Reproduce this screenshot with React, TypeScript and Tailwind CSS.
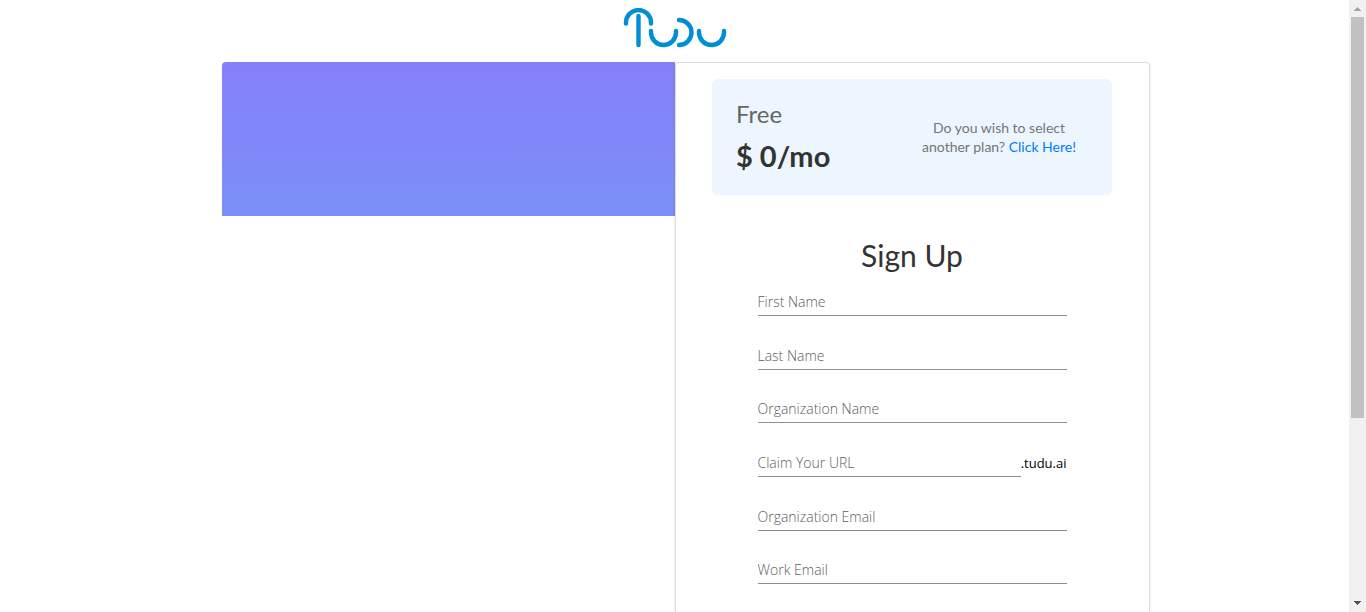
import React from "react";

type Field = { id: string; label: string; type: string; suffix?: string };

const fields: Field[] = [
  { id: "first-name", label: "First Name", type: "text" },
  { id: "last-name", label: "Last Name", type: "text" },
  { id: "organization-name", label: "Organization Name", type: "text" },
  { id: "url", label: "Claim Your URL", type: "text", suffix: ".tudu.ai" },
  { id: "organization-email", label: "Organization Email", type: "email" },
  { id: "work-email", label: "Work Email", type: "email" },
];

function Logo() {
  return (
    <svg
      width="105"
      height="40"
      viewBox="0 0 105 40"
      fill="none"
      stroke="#008fd5"
      strokeWidth="4.4"
      strokeLinecap="round"
      role="img"
      aria-label="Tudu"
    >
      <path d="M4 15.500v-1a12.500 12.500 0 0 1 25 0v1" />
      <path d="M16.500 8v29" />
      <path d="M29 23v1.500a12.500 12.500 0 0 0 25 0V23" />
      <path d="M57 12a12.500 12.500 0 0 1 0 25" />
      <path d="M77 23v1.500a12.500 12.500 0 0 0 25 0V23" />
    </svg>
  );
}

function SignUpField({ field }: { field: Field }) {
  return (
    <div className="flex items-start">
      <input
        id={field.id}
        type={field.type}
        placeholder={field.label}
        aria-label={field.label}
        className="h-[27px] min-w-0 flex-1 border-b border-[#8f8f8f] bg-transparent pb-px text-sm leading-5 font-light text-black outline-none placeholder:text-[#5c5c5c]"
      />
      {field.suffix && (
        <label htmlFor={field.id} className="text-[13px] leading-[26px] text-black">
          {field.suffix}
        </label>
      )}
    </div>
  );
}

function ScrollTrack() {
  return (
    <div aria-hidden="true" className="flex w-[17px] shrink-0 flex-col items-center bg-[#f1f1f1]">
      <svg width="17" height="17" viewBox="0 0 17 17" fill="#a3a3a3" shapeRendering="crispEdges">
        <path d="M8 7h1v1h1v1h1v1h1v1H5v-1h1V9h1V8h1z" />
      </svg>
      <div className="flex w-[13px] flex-1 flex-col">
        <div className="h-[69.400%] bg-[#c1c1c1]" />
      </div>
      <svg width="17" height="17" viewBox="0 0 17 17" fill="#505050" shapeRendering="crispEdges">
        <path d="M5 6h7v1h-1v1h-1v1H9v1H8V9H7V8H6V7H5z" />
      </svg>
    </div>
  );
}

export default function App() {
  return (
    <div className="flex h-screen bg-white font-['Lato',sans-serif]">
      <div className="flex min-w-0 flex-1 flex-col overflow-hidden">
        <header className="flex h-[62px] shrink-0 justify-center pt-2">
          <Logo />
        </header>
        <main className="grid flex-1 grid-cols-2">
          <div className="flex justify-end">
            <div className="h-[154px] w-full max-w-[453px] rounded-tl bg-linear-to-b from-[#8580fa] to-[#7b8ff8]" />
          </div>
          <section className="w-full max-w-[475px] rounded-t border border-b-0 border-[#dcdcdc] px-9 pt-4 shadow-sm">
            <div className="mx-auto flex h-[116px] max-w-[400px] items-center justify-between rounded-md bg-[#edf6ff] pr-9 pl-6">
              <div className="pt-0.5">
                <h2 className="text-2xl leading-9 text-[#666]">Free</h2>
                <p className="text-[29px] leading-[48px] font-bold text-[#333]">$ 0/mo</p>
              </div>
              <p className="w-[154px] text-center text-sm leading-[19px] text-[#757575]">
                Do you wish to select another plan?{" "}
                <a href="#plans" className="text-[#007bff]">
                  Click Here!
                </a>
              </p>
            </div>
            <form className="mx-auto max-w-[309px] pt-10" onSubmit={(e: React.FormEvent) => e.preventDefault()}>
              <h1 className="text-center text-3xl leading-10 text-[#333]">Sign Up</h1>
              <div className="mt-3.5 grid h-[322px] grid-rows-6 font-['Open_Sans',sans-serif]">
                {fields.map((field) => (
                  <SignUpField key={field.id} field={field} />
                ))}
              </div>
            </form>
          </section>
        </main>
      </div>
      <ScrollTrack />
    </div>
  );
}
